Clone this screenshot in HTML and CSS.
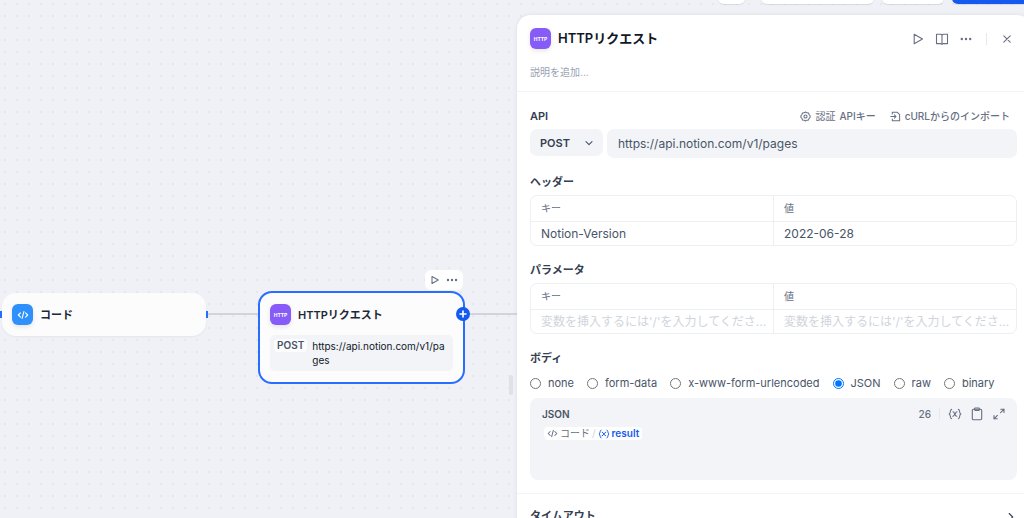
FILE: index.html
```html
<!DOCTYPE html>
<html lang="ja">
<head>
<meta charset="utf-8">
<title>HTTPリクエスト</title>
<link rel="stylesheet" href="styles.css">
</head>
<body>
<main class="canvas">
  <div class="toolbar">
    <button class="tool tool-small" type="button" aria-label="環境変数"></button>
    <button class="tool tool-wide" type="button" aria-label="プレビュー"></button>
    <button class="tool tool-mid" type="button" aria-label="公開履歴"></button>
    <button class="tool tool-primary" type="button" aria-label="公開する"></button>
  </div>

  <span class="edge edge-a"></span>
  <span class="edge edge-b"></span>

  <article class="node node-code">
    <span class="port port-in"></span>
    <span class="port port-out"></span>
    <header class="node-head">
      <span class="badge badge-code"><svg width="12" height="12" viewBox="0 0 12 12"><path d="M3.5 3.8 1.3 6l2.2 2.2M8.5 3.8 10.7 6 8.5 8.2M6.9 2.6 5.1 9.4"/></svg></span>
      <h2 class="node-title">コード</h2>
    </header>
  </article>

  <div class="node-actions">
    <button class="icon-btn" type="button" aria-label="実行"><svg width="10" height="10" viewBox="0 0 10 10"><path d="M2 1.5v7L8.3 5z"/></svg></button>
    <button class="icon-btn" type="button" aria-label="その他"><svg class="solid" width="12" height="12" viewBox="0 0 12 12"><circle cx="2" cy="6" r="1.2"/><circle cx="6" cy="6" r="1.2"/><circle cx="10" cy="6" r="1.2"/></svg></button>
  </div>

  <article class="node node-http">
    <button class="add" type="button" aria-label="追加"><svg class="thick" width="10" height="10" viewBox="0 0 10 10"><path d="M5 2v6M2 5h6"/></svg></button>
    <header class="node-head">
      <span class="badge badge-http">HTTP</span>
      <h2 class="node-title">HTTPリクエスト</h2>
    </header>
    <div class="request">
      <span class="method">POST</span>
      <span class="request-url">https://api.notion.com/v1/pages</span>
    </div>
  </article>

  <span class="resize"></span>

  <aside class="panel">
    <header class="panel-head">
      <div class="title-row">
        <span class="badge badge-http">HTTP</span>
        <h1 class="panel-title">HTTPリクエスト</h1>
        <div class="panel-actions">
          <button class="icon-btn" type="button" aria-label="実行"><svg width="14" height="14" viewBox="0 0 14 14"><path d="M3.2 2.3v9.4L11.5 7z"/></svg></button>
          <button class="icon-btn" type="button" aria-label="ドキュメント"><svg width="14" height="14" viewBox="0 0 14 14"><path d="M1.5 2.2h4.3L7 3l1.200-.8h4.300v9.400H8.200L7 12.400l-1.200-.8H1.500zM7 3v9.400"/></svg></button>
          <button class="icon-btn" type="button" aria-label="その他"><svg class="solid" width="14" height="14" viewBox="0 0 14 14"><circle cx="2.800" cy="7" r="1.200"/><circle cx="7" cy="7" r="1.200"/><circle cx="11.200" cy="7" r="1.200"/></svg></button>
          <span class="bar"></span>
          <button class="icon-btn" type="button" aria-label="閉じる"><svg width="14" height="14" viewBox="0 0 14 14"><path d="m3.800 3.800 6.400 6.400m0-6.400-6.400 6.400"/></svg></button>
        </div>
      </div>
      <input class="description" type="text" placeholder="説明を追加..." aria-label="説明">
    </header>

    <div class="panel-body">
      <section class="field">
        <div class="field-head">
          <h3 class="label">API</h3>
          <button class="link-btn" type="button"><svg width="11" height="11" viewBox="0 0 12 12"><path d="M6 1.100 7.400 2l1.900.1.500 1.700L11 5v2L9.800 8.200l-.5 1.700-1.900.1-1.400.9-1.400-.9-1.900-.1-.5-1.700L1 7V5l1.200-1.200.5-1.700L4.600 2z"/><circle cx="6" cy="6" r="1.700"/></svg><span>認証</span><b>APIキー</b></button>
          <button class="link-btn" type="button"><svg width="11" height="11" viewBox="0 0 12 12"><path d="M2.500 3.200V1.300h5.300l2.700 2.700v6.700h-8V8.800M.8 6h5.700M4.800 4.200 6.600 6 4.800 7.800"/></svg><b>cURLからのインポート</b></button>
        </div>
        <div class="endpoint">
          <div class="select-wrap">
            <select class="select" aria-label="メソッド"><option>POST</option><option>GET</option></select>
            <svg class="caret" width="10" height="10" viewBox="0 0 10 10"><path d="m2 3.600 3 3 3-3"/></svg>
          </div>
          <input class="url" type="text" value="https://api.notion.com/v1/pages" aria-label="URL">
        </div>
      </section>

      <section class="field">
        <div class="field-head"><h3 class="label">ヘッダー</h3></div>
        <div class="table-box">
          <table class="table">
            <thead><tr><th scope="col">キー</th><th scope="col">値</th></tr></thead>
            <tbody><tr><td><input class="cell" type="text" value="Notion-Version" aria-label="ヘッダーのキー"></td><td><input class="cell" type="text" value="2022-06-28" aria-label="ヘッダーの値"></td></tr></tbody>
          </table>
        </div>
      </section>

      <section class="field">
        <div class="field-head"><h3 class="label">パラメータ</h3></div>
        <div class="table-box">
          <table class="table">
            <thead><tr><th scope="col">キー</th><th scope="col">値</th></tr></thead>
            <tbody><tr><td><input class="cell" type="text" placeholder="変数を挿入するには'/'を入力してくださ..." aria-label="パラメータのキー"></td><td><input class="cell" type="text" placeholder="変数を挿入するには'/'を入力してくださ..." aria-label="パラメータの値"></td></tr></tbody>
          </table>
        </div>
      </section>

      <section class="field">
        <div class="field-head"><h3 class="label">ボディ</h3></div>
        <div class="radios">
          <label class="radio"><input type="radio" name="body">none</label>
          <label class="radio"><input type="radio" name="body">form-data</label>
          <label class="radio"><input type="radio" name="body">x-www-form-urlencoded</label>
          <label class="radio"><input type="radio" name="body" checked>JSON</label>
          <label class="radio"><input type="radio" name="body">raw</label>
          <label class="radio"><input type="radio" name="body">binary</label>
        </div>
        <div class="editor">
          <div class="editor-head">
            <h4 class="editor-title">JSON</h4>
            <span class="count">26</span>
            <span class="bar"></span>
            <button class="icon-btn" type="button" aria-label="変数"><svg width="14" height="14" viewBox="0 0 14 14"><path d="M3.600 2.400c-1.900 0-.5 3.800-2.400 4.600 1.900.8.500 4.600 2.400 4.600M10.400 2.400c1.900 0 .5 3.800 2.400 4.600-1.900.8-.5 4.600-2.400 4.600M5 4.800c1.600 0 2 4.400 3.800 4.400M9 4.800C7.400 4.800 6.600 9.200 4.800 9.200"/></svg></button>
            <button class="icon-btn" type="button" aria-label="コピー"><svg width="14" height="14" viewBox="0 0 14 14"><rect x="2.300" y="2.200" width="9.400" height="10.600" rx="1.200"/><rect x="4.600" y="1" width="4.800" height="2.400" rx=".6"/></svg></button>
            <button class="icon-btn" type="button" aria-label="拡大"><svg width="14" height="14" viewBox="0 0 14 14"><path d="M8.800 2.200h3.200v3.200M12 2.200 8.600 5.600M5.200 11.800H2V8.600M2 11.800l3.400-3.400"/></svg></button>
          </div>
          <div class="editor-body">
            <span class="variable">
              <svg width="11" height="11" viewBox="0 0 12 12"><path d="M3.500 3.800 1.300 6l2.200 2.200M8.500 3.800 10.700 6 8.500 8.200M6.900 2.600 5.100 9.400"/></svg>
              <span>コード</span>
              <span class="slash">/</span>
              <svg class="blue" width="12" height="12" viewBox="0 0 14 14"><path d="M3.600 2.400c-1.900 0-.5 3.800-2.400 4.600 1.900.8.500 4.600 2.400 4.600M10.400 2.400c1.900 0 .5 3.800 2.400 4.600-1.900.8-.5 4.600-2.400 4.600M5 4.800c1.600 0 2 4.400 3.800 4.400M9 4.800C7.400 4.800 6.600 9.200 4.800 9.200"/></svg>
              <b class="blue">result</b>
            </span>
          </div>
        </div>
      </section>
    </div>

    <button class="timeout" type="button"><span>タイムアウト</span><svg width="12" height="12" viewBox="0 0 12 12"><path d="M4.200 2.500 7.700 6 4.200 9.500"/></svg></button>
  </aside>
</main>
</body>
</html>
```
FILE: styles.css
```css
* { box-sizing: border-box; }

body {
  margin: 0;
  font-family: Inter, "Noto Sans CJK JP", sans-serif;
  font-size: 11px;
  color: #495468;
}

h1, h2, h3, h4 { margin: 0; font-weight: 600; }

button, input, select {
  margin: 0;
  padding: 0;
  border: 0;
  background: none;
  font: inherit;
  color: inherit;
}

b { font-weight: 500; }

svg {
  display: block;
  flex: none;
  fill: none;
  stroke: currentColor;
  stroke-width: 1.1;
  stroke-linecap: round;
  stroke-linejoin: round;
}

.solid { fill: currentColor; stroke: none; }
.thick { stroke-width: 1.6; }

.canvas {
  position: relative;
  height: 100vh;
  overflow: hidden;
  background: radial-gradient(circle at 5px 4px, #e5e7eb 1px, transparent 1px) 0 0 / 12px 12px #f0f1f6;
}

.toolbar {
  position: absolute;
  top: -20px;
  right: -20px;
  display: flex;
  gap: 8px;
}

.tool {
  height: 24px;
  border-radius: 6px;
  background: #fff;
  box-shadow: 0 1px 1px #1018281a;
}

.tool-small { width: 27px; margin-right: 8px; }
.tool-wide { width: 113px; }
.tool-mid { width: 62px; }
.tool-primary { width: 92px; background: #155aef; }

.edge {
  position: absolute;
  top: 313px;
  height: 2px;
  background: #d0d5dc;
}

.edge-a { left: 207px; width: 52px; }
.edge-b { left: 464px; width: 60px; }

.node {
  position: absolute;
  border-radius: 14px;
  background: #fcfcfd;
}

.node-code {
  left: 2px;
  top: 293px;
  width: 204px;
  padding: 11px 10px;
  box-shadow: 0 1px 2px #1018280d;
}

.node-http {
  left: 258px;
  top: 291px;
  width: 207px;
  padding: 11px 10px;
  border: 2px solid #296dff;
}

.node-head { display: flex; align-items: center; gap: 7px; }

.node-title { font-size: 11px; line-height: 16px; color: #1d2939; }

.badge {
  display: flex;
  flex: none;
  align-items: center;
  justify-content: center;
  width: 21px;
  height: 21px;
  border-radius: 6px;
  color: #fff;
  font-size: 5px;
  font-weight: 700;
  box-shadow: 0 2px 4px #1018281a;
}

.badge-code { background: #2e90fa; }
.badge-http { background: #875bf7; }

.port {
  position: absolute;
  top: 18px;
  width: 2px;
  height: 7px;
  background: #296dff;
}

.port-in { left: -2px; }
.port-out { right: -2px; }

.add {
  position: absolute;
  top: 14px;
  right: -7px;
  display: grid;
  place-items: center;
  width: 14px;
  height: 14px;
  border-radius: 50%;
  background: #155aef;
  color: #fff;
}

.node-actions {
  position: absolute;
  left: 425px;
  top: 270px;
  display: flex;
  align-items: center;
  gap: 6px;
  height: 20px;
  padding: 0 5px;
  border-radius: 6px;
  background: #fff;
  color: #676f83;
}

.request {
  display: flex;
  align-items: flex-start;
  gap: 5px;
  margin-top: 10px;
  padding: 4px;
  border-radius: 5px;
  background: #f2f4f7;
}

.method {
  padding: 0 3px;
  border-radius: 4px;
  background: #fcfcfd;
  font-size: 10px;
  font-weight: 600;
  line-height: 13px;
}

.request-url {
  min-width: 0;
  font-size: 10px;
  line-height: 14px;
  color: #101828;
  word-break: break-all;
}

.resize {
  position: absolute;
  left: 509px;
  top: 375px;
  width: 4px;
  height: 20px;
  border-radius: 2px;
  background: #dfe1e7;
}

.panel {
  position: absolute;
  left: 517px;
  right: -7px;
  top: 15px;
  bottom: -20px;
  border-radius: 14px;
  background: #fff;
  box-shadow: 0 0 4px #10182814;
}

.panel-head {
  padding: 13px 13px 11px;
  border-bottom: 1px solid #f2f3f6;
}

.title-row { display: flex; align-items: center; gap: 7px; }

.panel-title { flex: 1; font-size: 13px; line-height: 21px; color: #101828; }

.panel-actions {
  display: flex;
  align-items: center;
  gap: 10px;
  padding-right: 4px;
  color: #676f83;
}

.icon-btn { display: block; }

.bar { width: 1px; height: 12px; background: #e7e9ee; }

.panel-actions .bar { margin: 0 3px; }

.description {
  display: block;
  width: 100%;
  height: 17px;
  margin-top: 14px;
  font-size: 10px;
}

input::placeholder { color: #98a2b2; opacity: 1; }

.panel-body {
  display: grid;
  gap: 16px;
  padding: 16px 14px 13px 13px;
  border-bottom: 1px solid #f2f3f6;
}

.field { min-width: 0; }

.field-head {
  display: flex;
  align-items: center;
  gap: 14px;
  height: 17px;
  margin-bottom: 4px;
}

.label { flex: 1; font-size: 11px; line-height: 17px; color: #354052; }

.link-btn {
  display: flex;
  align-items: center;
  gap: 4px;
  font-size: 10px;
  line-height: 17px;
  color: #676f83;
}

.link-btn:last-child { padding-right: 7px; }

.endpoint { display: flex; align-items: flex-start; gap: 4px; }

.select-wrap { position: relative; width: 73px; }

.select {
  appearance: none;
  width: 100%;
  height: 27px;
  padding: 0 10px;
  border-radius: 7px;
  background: #f2f4f7;
  font-weight: 600;
  color: #354052;
}

.caret { position: absolute; top: 9px; right: 9px; }

.url {
  flex: 1;
  min-width: 0;
  height: 29px;
  padding: 0 11px;
  border-radius: 7px;
  background: #f2f4f7;
}

.table-box {
  overflow: hidden;
  border: 1px solid #edeff2;
  border-radius: 7px;
}

.table { width: 100%; border-collapse: collapse; table-layout: fixed; }

.table th, .table td { height: 24px; padding: 0 6px 0 10px; text-align: left; }

.table th {
  height: 25px;
  border-bottom: 1px solid #edeff2;
  font-size: 10px;
  font-weight: 400;
  line-height: 16px;
  color: #676f83;
}

.table th + th, .table td + td { border-left: 1px solid #edeff2; }

.cell { display: block; width: 100%; height: 20px; }

.url, .cell { font-size: 12px; }

.cell::placeholder { color: #d0d5dc; }

.radios { display: flex; align-items: center; gap: 13px; height: 20px; margin-top: 6px; }

.radio { display: flex; align-items: center; gap: 7px; white-space: nowrap; }

.radio input { width: 11px; height: 11px; accent-color: #0075ff; }

.editor {
  min-height: 82px;
  margin-top: 5px;
  padding: 7px 11px 7px 12px;
  border-radius: 8px;
  background: #f2f4f7;
}

.editor-head { display: flex; align-items: center; gap: 8px; height: 17px; color: #676f83; }

.editor-title { flex: 1; font-size: 10px; color: #495464; }

.count { font-size: 10px; font-weight: 500; }

.editor-body { padding: 5px 2px; }

.variable {
  display: inline-flex;
  align-items: center;
  gap: 2px;
  height: 13px;
  padding: 0 3px;
  border-radius: 4px;
  background: #fff;
  font-size: 10px;
  line-height: 13px;
  color: #676f83;
}

.slash { color: #d0d5dc; }

.blue { color: #155aef; font-weight: 600; }

.timeout {
  display: flex;
  align-items: center;
  justify-content: space-between;
  width: 100%;
  padding: 14px 14px 14px 13px;
  font-weight: 600;
  line-height: 17px;
  color: #354052;
}
```
